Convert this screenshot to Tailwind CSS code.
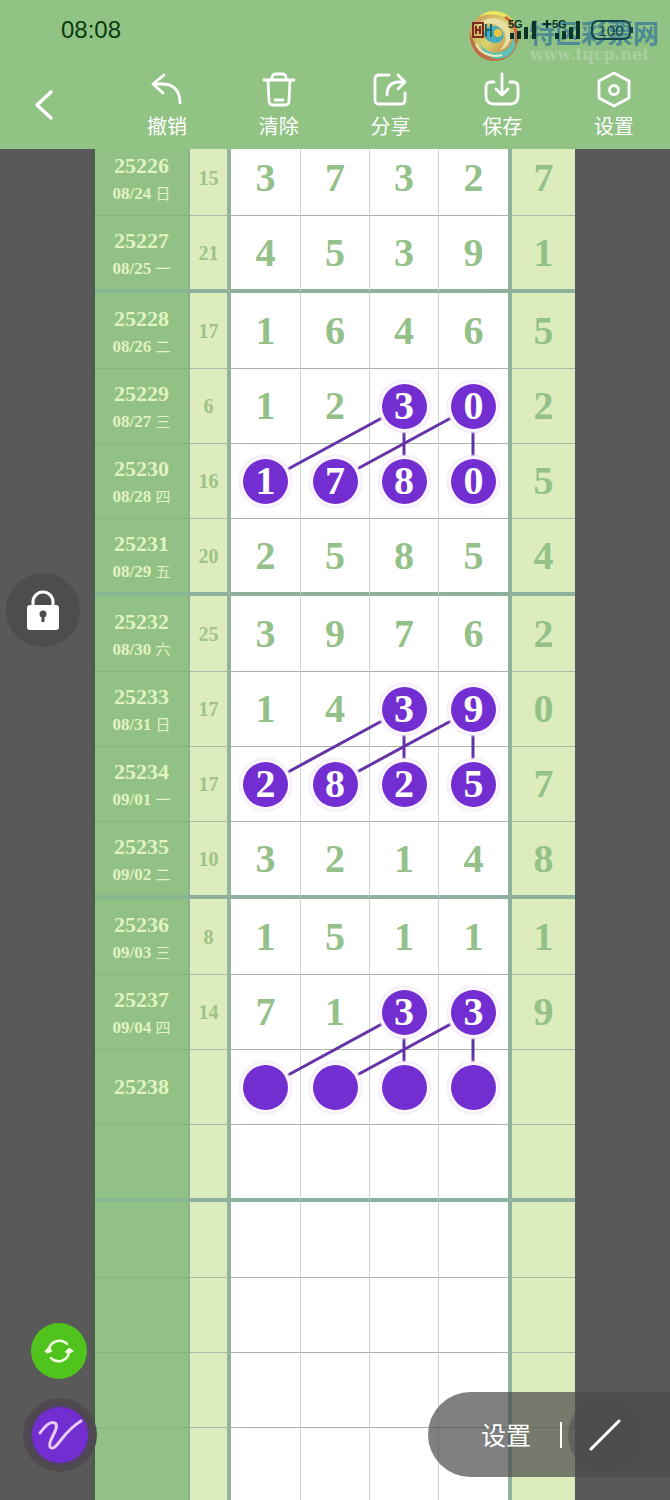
<!DOCTYPE html>
<html lang="zh-CN">
<head>
  <meta charset="UTF-8" />
  <meta name="viewport" content="width=device-width, initial-scale=1.0"/>
  <title>走势图</title>
  <script src="https://cdn.jsdelivr.net/npm/@tailwindcss/browser@4"></script>
</head>
<body class="relative h-screen flex flex-col overflow-hidden bg-[#595959] font-['Liberation_Sans','Noto_Sans_CJK_SC',sans-serif]">

  <!-- Header -->
  <header class="shrink-0 bg-[#91c384] text-white">
    <div class="relative h-[60px] flex items-center justify-between pl-[61px]">
      <span class="text-2xl text-[#0c3a10]">08:08</span>
      <svg class="w-[215px] h-[70px] absolute right-0 top-0" viewBox="455 0 215 70">
        <!-- Logo -->
        <defs>
          <linearGradient id="swirl" x1="0" y1="0" x2="1" y2="1">
            <stop offset="0" stop-color="#c98f5a"/>
            <stop offset="0.5" stop-color="#d9d36a"/>
            <stop offset="1" stop-color="#b9643c"/>
          </linearGradient>
        </defs>
        <circle cx="494" cy="36" r="25" fill="url(#swirl)"/>
        <path d="M479 17c10-10 29-7 36 7-9-9-23-12-36-7z" fill="#ece75f"/>
        <path d="M470 31c-2 16 8 29 23 30 11 0 20-5 23-14-8 8-18 10-27 6-10-4-17-11-19-22z" fill="#bb7248"/>
        <path d="M477 27c6-11 24-12 31-1 6 10 2 21-8 24 6-7 8-14 3-20-6-8-18-8-26-3z" fill="#e8dfa4"/>
        <path d="M480 42c4 11 18 14 27 7 5-4 7-10 6-18 6 12 1 24-10 27-11 3-21-4-23-16z" fill="#5bc4b4"/>
        <path d="M484 33c2-8 13-10 18-3 4 6 0 13-6 13-7 0-12-4-12-10z" fill="#48aebb"/>
        <path d="M476 44c4 9 15 14 26 11" fill="none" stroke="#e6ecc0" stroke-width="2"/>
        <path d="M505 17c9 5 13 15 11 26" fill="none" stroke="#c9683c" stroke-width="3"/>
        <circle cx="498" cy="33" r="4" fill="#e8c842"/>
        <!-- Watermark -->
        <text x="529" y="43" font-size="26" font-weight="700" fill="#4d8c93" font-family="Noto Sans CJK SC, sans-serif">特区彩票网</text>
        <text x="530" y="60" font-size="16" font-weight="700" fill="#a9cfa1" font-family="DejaVu Serif, serif">www.tqcp.net</text>
        <!-- HD badge -->
        <g fill="none" stroke="#7a2a1c" stroke-width="2">
          <path d="M473 23h10v14h-10zM476 26v8M480 26v8M476 30h4"/>
        </g>
        <path d="M486 24v13M491 24v13M486 30h5" stroke="#1c6673" stroke-width="2"/>
        <!-- Signals -->
        <g fill="#0c3328">
          <text x="508" y="28" font-size="11" font-weight="700" font-family="Liberation Sans, sans-serif">5G</text>
          <path d="M510 33h4v6h-4zM517 31h4v8h-4zM524 27h4v12h-4zM532 21h4v18h-4z"/>
          <path d="M543 23h8v2h-8zM546 20h2v8h-2z"/>
          <text x="552" y="28" font-size="11" font-weight="700" font-family="Liberation Sans, sans-serif">5G</text>
          <path d="M555 33h4v6h-4zM562 31h4v8h-4zM569 27h4v12h-4zM576 21h4v18h-4z"/>
        </g>
        <!-- Battery -->
        <rect x="592" y="21" width="38" height="18" rx="6" fill="none" stroke="#12444a" stroke-width="2"/>
        <path d="M632 27v6" stroke="#12444a" stroke-width="2"/>
        <text x="611" y="36" font-size="15" text-anchor="middle" fill="#12444a" font-family="Liberation Sans, sans-serif">100</text>
      </svg>
    </div>

    <nav class="h-[89px] flex text-xl leading-6">
      <button aria-label="返回" class="w-[111px] pl-[34px]">
        <svg class="w-5 h-8" viewBox="0 0 20 32" fill="none" stroke="currentColor" stroke-width="3.5" stroke-linecap="round" stroke-linejoin="round"><path d="M17 3 3 16l14 13"/></svg>
      </button>
      <button class="flex-1 flex flex-col items-center pt-3 gap-[7px]">
        <svg class="w-9 h-9" viewBox="0 0 36 36" fill="none" stroke="currentColor" stroke-width="2.8" stroke-linecap="round" stroke-linejoin="round"><path d="M15 3 4 12l10 9M4 12h9c12 0 18 7 18 19"/></svg>
        <span>撤销</span>
      </button>
      <button class="flex-1 flex flex-col items-center pt-3 gap-[7px]">
        <svg class="w-9 h-9" viewBox="0 0 36 36" fill="none" stroke="currentColor" stroke-width="2.8" stroke-linecap="round" stroke-linejoin="round"><path d="M3 8h30M11 8V6q0-4 4-4h6q4 0 4 4v2M7 8l1 21q0 4 4 4h12q4 0 4-4l1-21M14 28h8"/></svg>
        <span>清除</span>
      </button>
      <button class="flex-1 flex flex-col items-center pt-3 gap-[7px]">
        <svg class="w-9 h-9" viewBox="0 0 36 36" fill="none" stroke="currentColor" stroke-width="2.8" stroke-linecap="round" stroke-linejoin="round"><path d="M17 3H7Q3 3 3 7v21q0 4 4 4h22q4 0 4-4v-7M26 3l7 7-7 7M32 10h-5q-12 0-12 13"/></svg>
        <span>分享</span>
      </button>
      <button class="flex-1 flex flex-col items-center pt-3 gap-[7px]">
        <svg class="w-9 h-9" viewBox="0 0 36 36" fill="none" stroke="currentColor" stroke-width="2.8" stroke-linecap="round" stroke-linejoin="round"><path d="M10 10H7q-5 0-5 5v9q0 8 8 8h16q8 0 8-8v-9q0-5-5-5h-3M18 2v20M12 17l6 6 6-6"/></svg>
        <span>保存</span>
      </button>
      <button class="flex-1 flex flex-col items-center pt-3 gap-[7px]">
        <svg class="w-9 h-9" viewBox="0 0 36 36" fill="none" stroke="currentColor" stroke-width="2.8" stroke-linecap="round" stroke-linejoin="round"><path d="m18 1 15 8v17l-15 8-15-8V9z"/><circle cx="18" cy="18" r="4.500"/></svg>
        <span>设置</span>
      </button>
    </nav>
  </header>

  <!-- Chart -->
  <main class="flex-1 min-h-0 overflow-hidden">
    <div class="relative w-[480px] mx-auto -mt-2 shadow-[-3px_0_0_#4d5d4b]">
      <table class="w-full table-fixed border-separate border-spacing-0 text-center font-['Liberation_Serif','Noto_Sans_CJK_SC',serif] font-bold">
        <colgroup>
          <col class="w-[95px]" /><col class="w-[41px]" />
          <col class="w-[70px]" /><col class="w-[69px]" /><col class="w-[69px]" /><col class="w-[73px]" />
          <col class="w-[63px]" />
        </colgroup>
        <tbody id="rows"></tbody>
      </table>
      <svg id="links" class="absolute inset-0 w-full h-full" fill="none" stroke="#6433a8" stroke-width="3"></svg>
    </div>
  </main>

  <!-- Floating buttons -->
  <button aria-label="锁定" class="absolute left-[6px] top-[573px] w-[74px] h-[74px] rounded-full bg-[#4d4d4d] flex items-center justify-center">
    <svg class="w-9 h-10" viewBox="0 0 36 40"><path d="M8 17v-5a10 10 0 0 1 20 0v5" fill="none" stroke="#fff" stroke-width="3"/><rect x="2" y="15" width="32" height="25" rx="3" fill="#fff"/><circle cx="18" cy="24" r="3.5" fill="#4d4d4d"/><path d="M18 25v7" stroke="#4d4d4d" stroke-width="3"/></svg>
  </button>
  <button aria-label="切换" class="absolute left-[31px] bottom-[121px] w-14 h-14 rounded-full bg-[#50c41c] flex items-center justify-center">
    <svg class="w-8 h-8" viewBox="0 0 32 32" fill="none" stroke="#efffe0" stroke-width="2.5" stroke-linecap="round"><path d="M6 15a10.5 10.5 0 0 1 18-6M26 17a10.5 10.5 0 0 1-18 6"/><path d="m2 16 4-4 3 4-4 2zM30 16l-4-3-4 4 4 1z" fill="#efffe0" stroke-width="1"/></svg>
  </button>
  <button aria-label="画笔" class="absolute left-[23px] bottom-[28px] w-[74px] h-[74px] rounded-full bg-[#4e4a4e] flex items-center justify-center">
    <span class="w-14 h-14 rounded-full bg-[#722ed1] shadow-[0_0_4px_#5b2f96] flex items-center justify-center">
      <svg class="w-12 h-10" viewBox="0 0 48 40" fill="none" stroke="#e9c8fb" stroke-width="3" stroke-linecap="round" stroke-linejoin="round"><path d="M4 18C9 11 15 6 19 8c6 4-8 18-5 24 6 6 12-15 31-26"/></svg>
    </span>
  </button>
  <div class="absolute right-0 bottom-[23px] w-[242px] h-[85px] rounded-l-full bg-[#4a4a4a]/70 text-white flex items-center">
    <button class="ml-[53px] pt-1 text-[25px]">设置</button>
    <span class="ml-[29px] w-[2px] h-[26px] bg-white"></span>
    <button aria-label="直线" class="ml-[6px] w-[74px] h-[74px] rounded-full bg-[#4a4a4a]/50 flex items-center justify-center">
      <svg class="w-8 h-8" viewBox="0 0 32 32" stroke="#fff" stroke-width="3" stroke-linecap="round"><path d="M2 30 30 2"/></svg>
    </button>
  </div>

  <script>
    // no, date, weekday, sum, numbers, last, marked columns
    const draws = [
      ["25226", "08/24", "日", "15", "3732", "7", []],
      ["25227", "08/25", "一", "21", "4539", "1", []],
      ["25228", "08/26", "二", "17", "1646", "5", []],
      ["25229", "08/27", "三", "6", "1230", "2", [2, 3]],
      ["25230", "08/28", "四", "16", "1780", "5", [0, 1, 2, 3]],
      ["25231", "08/29", "五", "20", "2585", "4", []],
      ["25232", "08/30", "六", "25", "3976", "2", []],
      ["25233", "08/31", "日", "17", "1439", "0", [2, 3]],
      ["25234", "09/01", "一", "17", "2825", "7", [0, 1, 2, 3]],
      ["25235", "09/02", "二", "10", "3214", "8", []],
      ["25236", "09/03", "三", "8", "1511", "1", []],
      ["25237", "09/04", "四", "14", "7133", "9", [2, 3]],
      ["25238", "", "", "", "", "", [0, 1, 2, 3]],
      ["", "", "", "", "", "", []],
      ["", "", "", "", "", "", []],
      ["", "", "", "", "", "", []],
      ["", "", "", "", "", "", []],
      ["", "", "", "", "", "", []]
    ];

    function ball(text) {
      return `<span class="relative z-10 mx-auto w-[45px] h-[45px] rounded-full bg-[#722ed1] text-white shadow-[0_0_0_3px_#fdf6ff,0_0_2px_4px_#eee4f2] flex items-center justify-center">${text}</span>`;
    }

    document.getElementById("rows").innerHTML = draws.map(([no, date, day, sum, nums, last, marks], i) => {
      // every fourth row closes a group with a thick line
      const pos = (i + 2) % 4;
      const height = pos === 3 ? "h-[77px]" : pos === 0 ? "h-[76px]" : "h-[75px]";
      const line = pos === 3 ? "border-b-4 border-b-[#8fb09c]" : "border-b border-b-[#a9b8a4]";
      const headLine = pos === 3 ? "border-b-4 border-b-[#88b794]" : "border-b border-b-[#86b57b]";
      const cells = [0, 1, 2, 3].map(c => {
        const side = c === 3 ? "border-r-4 border-r-[#8fb09c]" : "border-r border-r-[#cbd6d0]";
        const n = nums[c] || "";
        return `<td class="p-0 bg-white text-[40px] leading-10 text-[#94c189] ${line} ${side}">${marks.includes(c) ? ball(n) : n}</td>`;
      }).join("");
      return `<tr class="${height}">
        <th scope="row" class="p-0 bg-[#91c184] text-[#e2f3c2] border-r-2 border-r-[#8fb094] ${headLine}">
          <div class="text-[22px] leading-6">${no}</div>
          ${date ? `<div class="pt-1 -mb-1 text-[17px] leading-6">${date} <span class="text-[15px] font-normal">${day}</span></div>` : ""}
        </th>
        <td class="p-0 bg-[#dcecbd] text-xl text-[#9ec287] border-r-4 border-r-[#93b498] ${line}">${sum}</td>
        ${cells}
        <td class="p-0 bg-[#dcecbd] text-[40px] leading-10 text-[#94c189] ${line}">${last}</td>
      </tr>`;
    }).join("");

    // Lines from each marked pair to the row below
    const x = [171, 240, 309, 378];
    document.getElementById("links").innerHTML = [265, 568, 871].map(y =>
      [[2, 0], [3, 1], [2, 2], [3, 3]].map(([a, b]) =>
        `<path d="M${x[a]} ${y}L${x[b]} ${y + 75}"/>`).join("")
    ).join("");
  </script>
</body>
</html>
